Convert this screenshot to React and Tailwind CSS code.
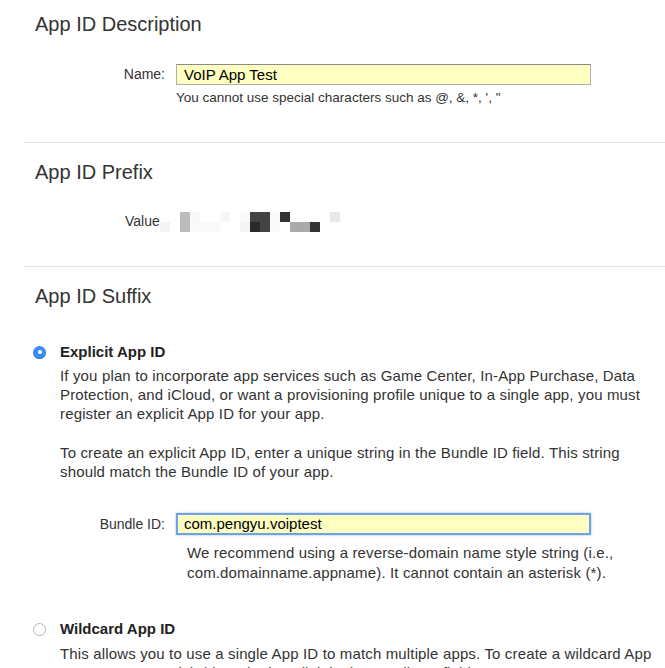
const font = { fontFamily: '"Liberation Sans", Arial, sans-serif' }

const mosaic = [
  // [left, top, color]
  [160, 10, '#f5f5f5'],
  [180, 0, '#bbbbbb'],
  [180, 10, '#bbbbbb'],
  [190, 0, '#f8f8f8'],
  [190, 10, '#fafafa'],
  [200, 10, '#fafafa'],
  [210, 10, '#fafafa'],
  [220, 0, '#f6f6f6'],
  [240, 0, '#fafafa'],
  [240, 10, '#f4f4f4'],
  [250, 0, '#444444'],
  [250, 10, '#2a2a2a'],
  [260, 0, '#444444'],
  [260, 10, '#444444'],
  [270, 0, '#fafafa'],
  [270, 10, '#fafafa'],
  [280, 0, '#333333'],
  [290, 10, '#aaaaaa'],
  [300, 10, '#aaaaaa'],
  [310, 10, '#333333'],
  [330, 0, '#e8e8e8'],
]

function Heading({ children }) {
  return <h2 className="pl-[35px] text-[20px] leading-[24px] text-[#333]">{children}</h2>
}

function Radio({ checked }) {
  if (checked) {
    return (
      <span className="flex h-[13px] w-[13px] items-center justify-center rounded-full bg-[#3a8cf2] shadow-[inset_0_-1px_0_#2b74d6]">
        <span className="h-[4px] w-[4px] rounded-full bg-white" />
      </span>
    )
  }
  return <span className="block h-[13px] w-[13px] rounded-full border border-[#b5b5b5] bg-white" />
}

function Body({ className = '', children }) {
  return <p className={`text-[15px] leading-[19px] tracking-[0.15px] ${className}`}>{children}</p>
}

function App() {
  return (
    <div className="h-[668px] w-[665px] overflow-hidden bg-white text-[#333]" style={font}>
      {/* App ID Description */}
      <section className="pt-[12px]">
        <Heading>App ID Description</Heading>
        <div className="mt-[28px] flex">
          <label className="w-[176px] pr-[11px] pt-[2px] text-right text-[14px] leading-[17px]">Name:</label>
          <div>
            <div className="h-[21px] w-[415px] border border-[#b0b0b0] border-t-[#8a8a8a] bg-[#ffffc2] px-[7px] text-[15px] leading-[19px] text-black">
              VoIP App Test
            </div>
            <p className="mt-[4px] text-[13.5px] leading-[17px]">You cannot use special characters such as @, &amp;, *, ', "</p>
          </div>
        </div>
      </section>

      <div className="ml-[24px] mt-[36px] h-px bg-[#e4e4e4]" />

      {/* App ID Prefix */}
      <section className="pt-[17px]">
        <Heading>App ID Prefix</Heading>
        <div className="relative mt-[28px] h-[20px]">
          <span className="absolute left-[125px] top-[1px] text-[14px] leading-[17px]">Value</span>
          {mosaic.map(([left, top, color], i) => (
            <span
              key={i}
              className="absolute h-[10px] w-[10px]"
              style={{ left, top, background: color }}
            />
          ))}
        </div>
      </section>

      <div className="ml-[24px] mt-[34px] h-px bg-[#e4e4e4]" />

      {/* App ID Suffix */}
      <section className="pt-[17px]">
        <Heading>App ID Suffix</Heading>

        <div className="mt-[35px] flex items-center gap-[14px] pl-[33px]">
          <Radio checked />
          <span className="text-[15px] font-bold leading-[18px] text-[#222]">Explicit App ID</span>
        </div>
        <div className="pl-[60px]">
          <Body className="mt-[5px]">
            If you plan to incorporate app services such as Game Center, In-App Purchase, Data<br />
            Protection, and iCloud, or want a provisioning profile unique to a single app, you must<br />
            register an explicit App ID for your app.
          </Body>
          <Body className="mt-[20px]">
            To create an explicit App ID, enter a unique string in the Bundle ID field. This string<br />
            should match the Bundle ID of your app.
          </Body>
        </div>

        <div className="mt-[32px] flex">
          <label className="w-[176px] pr-[11px] pt-[3px] text-right text-[14px] leading-[17px]">Bundle ID:</label>
          <div>
            <div className="h-[22px] w-[415px] border-2 border-[#6ea2e6] bg-[#ffffc2] px-[6px] text-[15px] leading-[18px] text-black shadow-[0_0_2px_#8fb8ee]">
              com.pengyu.voiptest
            </div>
            <p className="ml-[11px] mt-[8px] text-[15px] leading-[20px] tracking-[0.15px]">
              We recommend using a reverse-domain name style string (i.e.,<br />
              com.domainname.appname). It cannot contain an asterisk (*).
            </p>
          </div>
        </div>

        <div className="mt-[37px] flex items-center gap-[14px] pl-[33px]">
          <Radio />
          <span className="text-[15px] font-bold leading-[18px] text-[#222]">Wildcard App ID</span>
        </div>
        <Body className="mt-[6px] whitespace-nowrap pl-[60px]">
          This allows you to use a single App ID to match multiple apps. To create a wildcard App<br />
          ID, enter an asterisk (*) as the last digit in the Bundle ID field.
        </Body>
      </section>
    </div>
  )
}

export default App
